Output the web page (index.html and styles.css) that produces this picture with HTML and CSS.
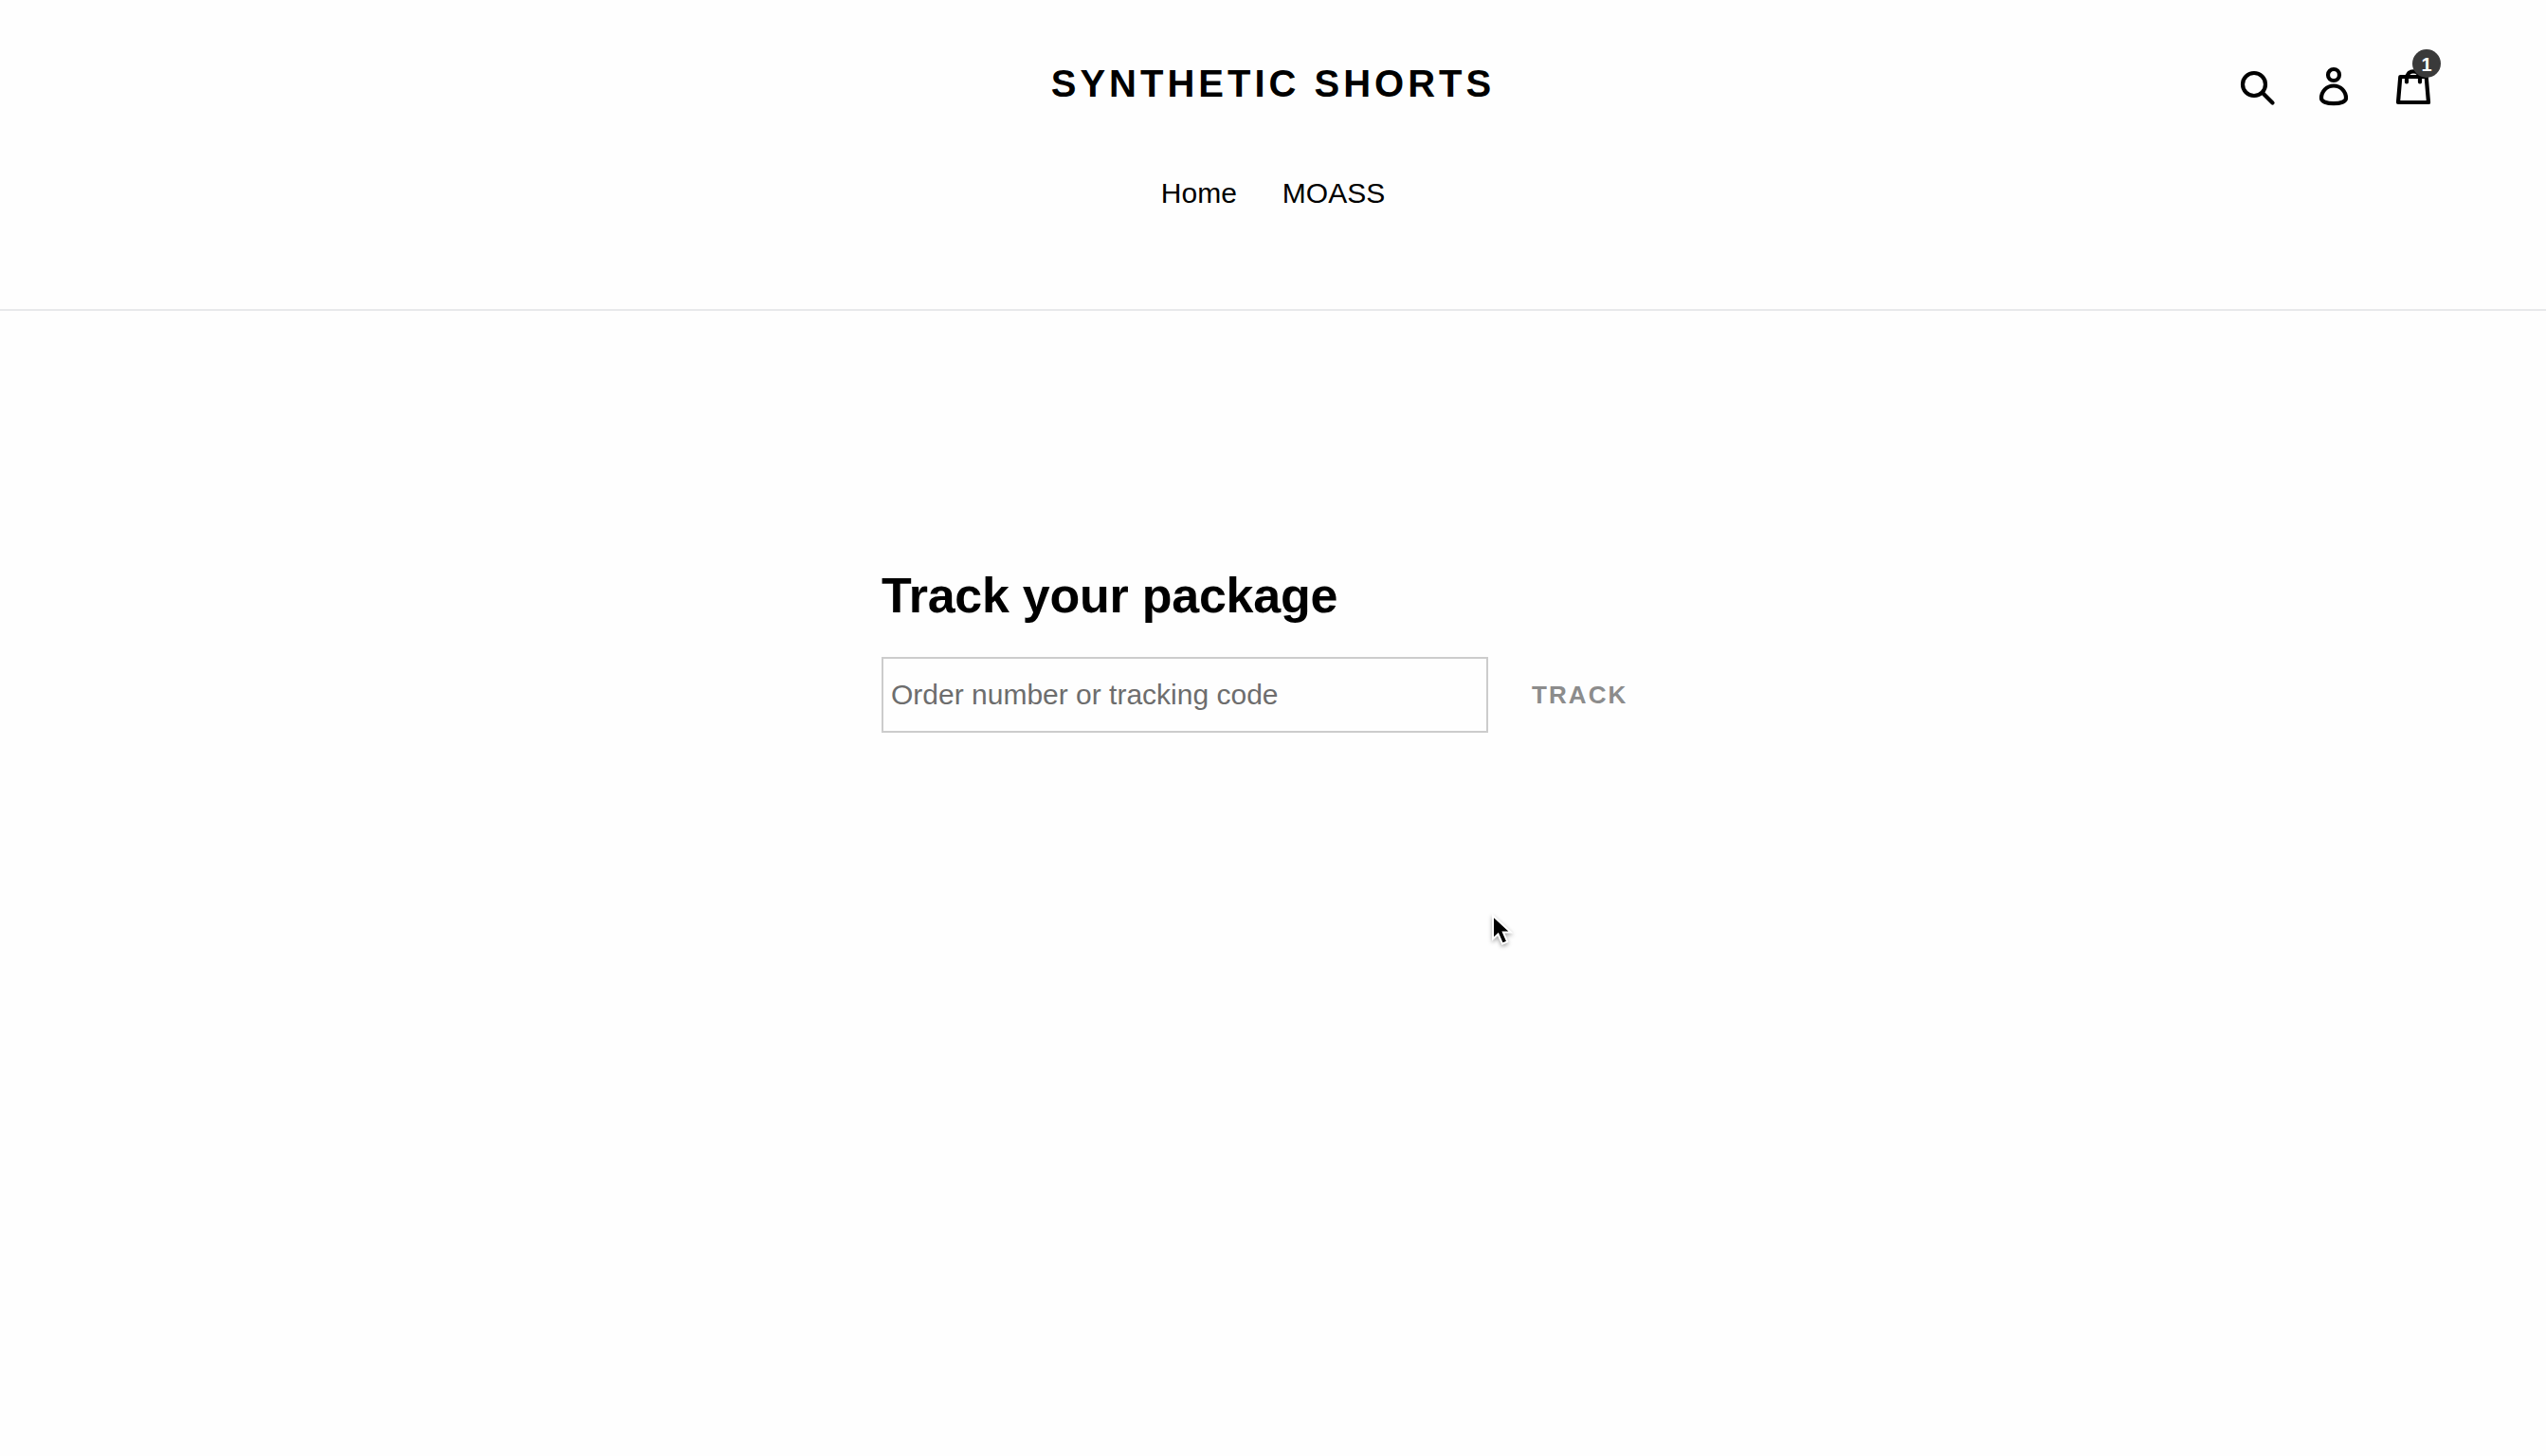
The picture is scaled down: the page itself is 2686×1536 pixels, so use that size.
FILE: index.html
```html
<!DOCTYPE html>
<html lang="en">
  <head>
    <meta charset="UTF-8">
    <title>Track your package - Synthetic Shorts</title>
    <link rel="stylesheet" href="styles.css">
  </head>
  <body>
    <header class="site-header">
      <div class="header-top">
        <a class="site-name" href="#">SYNTHETIC SHORTS</a>
        <div class="header-icons">
          <a href="#" class="icon-link" aria-label="Search">
            <svg class="icon" width="38" height="42" viewBox="0 0 38 42">
              <circle cx="15" cy="19" r="12"/>
              <path d="M24 28l10.500 10.500"/>
            </svg>
          </a>
          <a href="#" class="icon-link" aria-label="Log in">
            <svg class="icon" width="34" height="42" viewBox="0 0 34 42">
              <circle cx="17" cy="9" r="6"/>
              <path d="M17 20.500C9.500 20.500 4 26.500 4 33.500c0 3.600 5.500 5.700 13 5.700s13-2.100 13-5.700C30 26.500 24.500 20.500 17 20.500z"/>
            </svg>
          </a>
          <a href="#" class="icon-link cart" aria-label="Cart">
            <svg class="icon" width="38" height="42" viewBox="0 0 38 42">
              <path d="M5.300 11h27.400l2.300 27H3z"/>
              <path d="M12 16.500V13c0-4.800 3-7.700 7-7.700s7 2.900 7 7.700v3.500"/>
            </svg>
            <span class="cart-count">1</span>
          </a>
        </div>
      </div>
      <nav class="site-nav">
        <a href="#">Home</a>
        <a href="#">MOASS</a>
      </nav>
    </header>

    <main class="tracking">
      <h1>Track your package</h1>
      <form class="track-form">
        <input type="text" placeholder="Order number or tracking code">
        <button type="button" disabled>TRACK</button>
      </form>
    </main>

    <svg class="pointer" width="30" height="42" viewBox="0 0 30 42">
      <path d="M5 4v24.500l5.500-5 4.500 10.200 5.200-2.300-4.300-9.900h8z"/>
    </svg>
  </body>
</html>
```
FILE: styles.css
```css
* {
  box-sizing: border-box;
}

body {
  margin: 0;
  min-height: 100vh;
  background: #fefefe;
  color: #000;
  font-family: "Liberation Sans", Arial, sans-serif;
  font-size: 30px;
}

a {
  color: inherit;
  text-decoration: none;
}

/* header */
.site-header {
  height: 328px;
  padding-top: 52px;
  border-bottom: 2px solid #e8e9eb;
}

.header-top {
  display: grid;
  grid-template-columns: 1fr auto 1fr;
  padding-right: 121px;
  padding-left: 121px;
}

.site-name {
  grid-column: 2;
  font-size: 40px;
  font-weight: bold;
  letter-spacing: 4px;
  line-height: 72px;
}

.header-icons {
  display: flex;
  justify-content: flex-end;
  gap: 46px;
  padding-top: 18px;
}

.icon-link {
  display: block;
  height: 42px;
}

.icon-link:first-child {
  margin-right: -2px;
}

.icon {
  display: block;
  fill: none;
  stroke: #000;
  stroke-width: 4.2;
  stroke-linecap: round;
  stroke-linejoin: round;
}

.cart {
  position: relative;
  margin-left: 2px;
}

.cart-count {
  position: absolute;
  top: -18px;
  right: -10px;
  width: 30px;
  height: 30px;
  border-radius: 50%;
  background: #3a3a3a;
  color: #fff;
  font-size: 20px;
  font-weight: bold;
  line-height: 32px;
  text-align: center;
}

.site-nav {
  display: flex;
  justify-content: center;
  gap: 48px;
  margin-top: 62px;
  line-height: 36px;
}

/* tracking form */
.tracking {
  width: 826px;
  margin: 0 auto;
  padding-top: 270px;
}

.tracking h1 {
  margin: 0 0 35px;
  font-size: 52px;
  letter-spacing: -0.25px;
  line-height: 60px;
}

.track-form {
  display: flex;
}

.track-form input {
  flex: none;
  width: 640px;
  height: 80px;
  padding: 0 8px;
  border: 2px solid #ccc;
  background: transparent;
  font-family: inherit;
  font-size: 30px;
}

.track-form input::placeholder {
  color: #6d6d6d;
}

.track-form button {
  padding: 0 46px;
  border: 0;
  background: none;
  color: #8c8c8c;
  font-family: inherit;
  font-size: 26px;
  font-weight: bold;
  letter-spacing: 2.1px;
}

/* mouse pointer */
.pointer {
  position: absolute;
  left: 1570px;
  top: 962px;
  fill: #000;
  stroke: #fff;
  stroke-width: 2;
  filter: drop-shadow(0 2px 2px rgba(0, 0, 0, 0.35));
}
```
